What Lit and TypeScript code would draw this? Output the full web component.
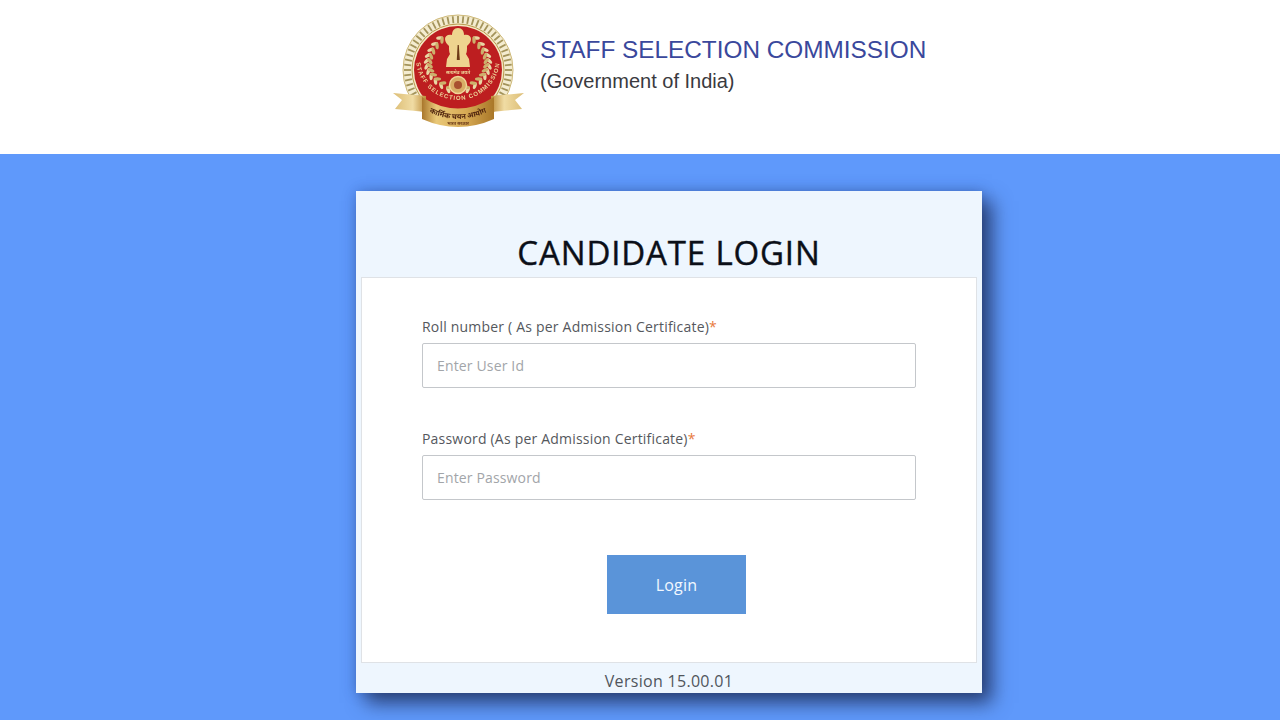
import { LitElement, html, css, svg } from "lit";
import { customElement } from "lit/decorators.js";

const CX = 66;
const CY = 62;

const ticks = () => {
  const out = [];
  for (let i = 0; i < 64; i++) {
    out.push(
      svg`<line x1=${CX} y1=${CY - 54} x2=${CX} y2=${CY - 47} stroke="#a3935a" stroke-width="1.8" transform="rotate(${i * 5.625} ${CX} ${CY})"/>`
    );
  }
  return out;
};

// Laurel branch: leaf pairs laid along a quadratic curve, mirrored for the right side.
const wreath = (side: number) => {
  const out = [];
  const p0 = [48, 32];
  const p1 = [20, 62];
  const p2 = [58, 81];
  const n = 11;
  for (let i = 0; i < n; i++) {
    const t = i / (n - 1);
    const u = 1 - t;
    const x = u * u * p0[0] + 2 * u * t * p1[0] + t * t * p2[0];
    const y = u * u * p0[1] + 2 * u * t * p1[1] + t * t * p2[1];
    const dx = 2 * u * (p1[0] - p0[0]) + 2 * t * (p2[0] - p1[0]);
    const dy = 2 * u * (p1[1] - p0[1]) + 2 * t * (p2[1] - p1[1]);
    const a = (Math.atan2(dy, dx) * 180) / Math.PI - 90;
    const sx = side < 0 ? x : 2 * CX - x;
    const rotOut = side < 0 ? a + 40 : -a - 40;
    const rotIn = side < 0 ? a - 40 : -a + 40;
    out.push(svg`
      <ellipse cx=${sx} cy=${y} rx="1.7" ry="3.6" fill="#e9d6a4" transform="rotate(${rotOut} ${sx} ${y}) translate(${-side * -2} 0)"/>
      <ellipse cx=${sx} cy=${y} rx="1.7" ry="3.6" fill="#cdb06c" transform="rotate(${rotIn} ${sx} ${y}) translate(${side * -2} 0)"/>
    `);
  }
  return out;
};

@customElement("app-root")
export class AppRoot extends LitElement {
  static styles = css`
    :host {
      display: flex;
      flex-direction: column;
      width: 1280px;
      height: 720px;
      overflow: hidden;
      background: #5f99fb;
      font-family: "Open Sans", sans-serif;
    }
    .top {
      height: 154px;
      flex: none;
      background: #fff;
      display: flex;
      padding-left: 392px;
      box-sizing: border-box;
    }
    .logo {
      width: 133px;
      height: 125px;
      margin-top: 8px;
      flex: none;
      filter: blur(0.5px);
    }
    .org {
      margin: 33px 0 0 15px;
      font-family: "Liberation Sans", Arial, sans-serif;
    }
    .org-name {
      font-size: 24.35px;
      line-height: 33px;
      color: #3a489c;
      white-space: nowrap;
    }
    .org-sub {
      font-size: 20px;
      line-height: 26px;
      margin-top: 2px;
      color: #3a3a40;
      white-space: nowrap;
    }
    .card {
      width: 626px;
      height: 502px;
      margin: 37px 0 0 356px;
      background: #eef6fe;
      box-shadow: 10px 10px 18px rgba(30, 44, 85, 0.78), 0 0 12px rgba(30, 60, 140, 0.35);
      display: flex;
      flex-direction: column;
      box-sizing: border-box;
      padding: 0 5px;
      flex: none;
    }
    h1 {
      margin: 0;
      height: 86px;
      flex: none;
      box-sizing: border-box;
      padding-top: 39px;
      text-align: center;
      font-size: 33px;
      line-height: 46px;
      font-weight: 400;
      letter-spacing: 0.85px;
      color: #0b0f18;
      -webkit-text-stroke: 0.4px #0b0f18;
    }
    .panel {
      height: 386px;
      flex: none;
      box-sizing: border-box;
      background: #fff;
      border: 1px solid #dfe2e6;
      padding: 37px 60px 0;
      display: flex;
      flex-direction: column;
    }
    .field {
      display: flex;
      flex-direction: column;
      height: 111.5px;
    }
    label {
      font-size: 14px;
      line-height: 24px;
      height: 28px;
      color: #55585d;
      letter-spacing: 0.2px;
      white-space: nowrap;
    }
    label span {
      color: #e8793c;
    }
    .input {
      height: 45px;
      box-sizing: border-box;
      border: 1px solid #c4c7cb;
      border-radius: 2px;
      padding: 0 14px;
      font-size: 14px;
      letter-spacing: 0.15px;
      display: flex;
      align-items: center;
      color: #a2a5a9;
    }
    .actions {
      display: flex;
      justify-content: center;
      padding: 0 0 0 15px;
      margin-top: 17px;
    }
    .login {
      width: 139px;
      height: 59px;
      background: #5a94d9;
      color: #f2f8ff;
      font-size: 16px;
      letter-spacing: 0.2px;
      display: flex;
      align-items: center;
      justify-content: center;
    }
    .version {
      flex: 1;
      text-align: center;
      font-size: 16px;
      line-height: 36px;
      color: #50555c;
      letter-spacing: 0.3px;
    }
  `;

  render() {
    return html`
      <div class="top">
        <svg class="logo" viewBox="0 0 133 125" aria-label="Staff Selection Commission emblem">
          <defs>
            <linearGradient id="gold" x1="0" x2="1" y1="0" y2="0">
              <stop offset="0" stop-color="#a9772c" />
              <stop offset=".2" stop-color="#e9c878" />
              <stop offset=".6" stop-color="#d8ab55" />
              <stop offset="1" stop-color="#a97728" />
            </linearGradient>
            <linearGradient id="tail" x1="0" x2="1" y1="0" y2="0">
              <stop offset="0" stop-color="#dcbd75" />
              <stop offset=".6" stop-color="#f0dca4" />
              <stop offset="1" stop-color="#bd8e3c" />
            </linearGradient>
            <linearGradient id="tailr" x1="1" x2="0" y1="0" y2="0">
              <stop offset="0" stop-color="#dcbd75" />
              <stop offset=".6" stop-color="#f0dca4" />
              <stop offset="1" stop-color="#bd8e3c" />
            </linearGradient>
            <path id="arc" d="M 24 50 A 42 42 0 1 0 108 50" />
            <path id="band" d="M 31 101 Q 66 121 101 101" />
          </defs>

          <circle cx=${CX} cy=${CY} r="55" fill="#f4ecd0" stroke="#cdb878" stroke-width="1" />
          ${ticks()}
          <circle cx=${CX} cy=${CY} r="46" fill="#f5e9c4" stroke="#b99a4e" stroke-width="1" />
          <circle cx=${CX} cy=${CY} r="44" fill="#bd1e20" />

          ${wreath(-1)} ${wreath(1)}

          <path
            d="M60 27c0-4 2-7 6-7s6 3 6 7c4-1 7 1 7 4 0 3-2 5-4 7 0 4 0 6-1 8l3 5 1 8H54l1-8 3-5c-1-2-1-4-1-8-2-2-4-4-4-7 0-3 3-5 7-4z"
            fill="#eed48f"
          />
          <path d="M65.6 37h1.2l1 15h-3z" fill="#6d3a16" />
          <text x=${CX} y="66" text-anchor="middle" font-family="Noto Sans, sans-serif" font-size="4.6" font-weight="700" fill="#f0d79a">सत्यमेव जयते</text>

          <circle cx=${CX} cy="77" r="8.5" fill="#d8ad66" stroke="#f0d79a" stroke-width="1.4" />
          <circle cx=${CX} cy="77" r="4" fill="#a8502f" />

          <text font-family="Liberation Sans, sans-serif" font-size="6" font-weight="700" fill="#efd69a" letter-spacing="1">
            <textPath href="#arc" startOffset="50%" text-anchor="middle">STAFF SELECTION COMMISSION</textPath>
          </text>

          <path d="M1 85L34 88V104L3 101L10 92Z" fill="url(#tail)" />
          <path d="M132 85L99 88V104L130 101L123 92Z" fill="url(#tailr)" />
          <path d="M30 89Q66 112 102 89V111Q66 127 30 111Z" fill="url(#gold)" />
          <text font-family="Noto Sans, sans-serif" font-size="7.4" font-weight="700" fill="#51260f">
            <textPath href="#band" startOffset="50%" text-anchor="middle">कार्मिक चयन आयोग</textPath>
          </text>
          <text x=${CX} y="117" text-anchor="middle" font-family="Noto Sans, sans-serif" font-size="4.2" font-weight="700" fill="#6b3a18">भारत सरकार</text>
        </svg>
        <div class="org">
          <div class="org-name">STAFF SELECTION COMMISSION</div>
          <div class="org-sub">(Government of India)</div>
        </div>
      </div>
      <div class="card">
        <h1>CANDIDATE LOGIN</h1>
        <div class="panel">
          <div class="field">
            <label>Roll number ( As per Admission Certificate)<span>*</span></label>
            <div class="input">Enter User Id</div>
          </div>
          <div class="field">
            <label>Password (As per Admission Certificate)<span>*</span></label>
            <div class="input">Enter Password</div>
          </div>
          <div class="actions"><div class="login">Login</div></div>
        </div>
        <div class="version">Version 15.00.01</div>
      </div>
    `;
  }
}
